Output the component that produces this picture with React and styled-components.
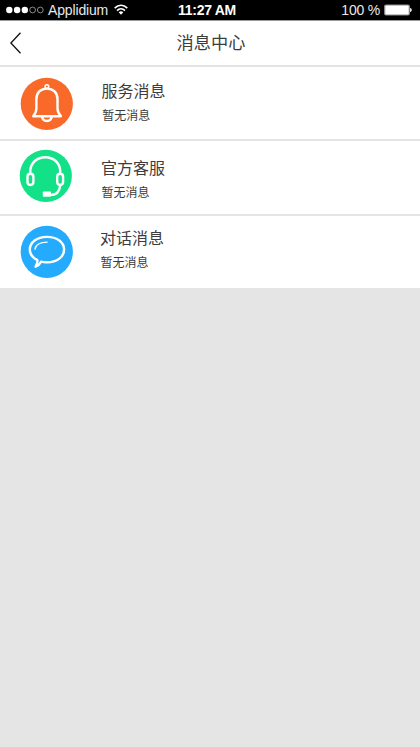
import React from 'react';
import styled, { createGlobalStyle } from 'styled-components';


const messages = [
  { id: 'service', title: '服务消息', text: '暂无消息', color: '#f8692a', height: 72, top: 11, left: 21, textTop: 11, gap: 28.5, indent: 0.7 },
  { id: 'support', title: '官方客服', text: '暂无消息', color: '#12e188', height: 73, top: 9, left: 20, textTop: 14, gap: 29, indent: 0.5 },
  { id: 'chat', title: '对话消息', text: '暂无消息', color: '#24abfd', height: 72, top: 10, left: 21, textTop: 9, gap: 27, indent: 0.6 },
];

const BellIcon = () => (
  <>
    <path d="M12.6 38.5 C14.4 36.4 15.8 34 15.8 30.6 V21.5 C15.8 15 20 10.9 26.3 10.9 S36.9 15 36.9 21.5 V30.6 C36.9 34 38.3 36.4 40.3 38.5 Z" />
    <path d="M21.5 39 C21.9 42.2 23.9 43.3 26.3 43.3 S30.7 42.2 31.1 39" />
    <circle cx="26.3" cy="8.8" r="1.8" strokeWidth="1.6" />
  </>
);

const HeadsetIcon = () => (
  <>
    <path d="M10.7 24 V21.5 C10.9 13 17.6 7.5 25.7 7.5 S40.4 13 40.6 21.5 V24" />
    <rect x="7.9" y="24.1" width="5.9" height="11.2" rx="2.9" />
    <rect x="37.6" y="24.1" width="5.9" height="11.2" rx="2.9" />
    <path d="M40.6 35.6 C40 41.6 36.8 45.2 31 45.2" />
    <rect x="23.2" y="41.8" width="8.2" height="5.2" rx="0.8" fill="#fff" stroke="none" />
  </>
);

const ChatIcon = () => (
  <>
    <path d="M20.4 36 C22.2 36.5 24.3 36.8 26.4 36.7 C36.4 36.4 43.6 31.3 43.5 23.7 C43.4 16 35.8 11.1 26.2 11.2 C16.4 11.3 9.1 16.6 9.2 24.1 C9.3 28.6 12 32 16.8 34.3 C17 36.6 16.2 39 15 41 C18 39.8 19.4 38.2 20.4 36 Z" />
    <path d="M14.4 23.5 C14.8 19.3 19.4 16.4 26.6 16.4" strokeWidth="1.3" />
  </>
);

const icons = { service: BellIcon, support: HeadsetIcon, chat: ChatIcon };

const StatusBar = () => (
  <Status>
    <Carrier>
      <svg width="38" height="8" viewBox="0 0 38 8">
        <circle cx="3.3" cy="4" r="3.2" fill="#fff" />
        <circle cx="11.1" cy="4" r="3.2" fill="#fff" />
        <circle cx="18.8" cy="4" r="3.2" fill="#fff" />
        <circle cx="26.6" cy="4" r="2.9" fill="none" stroke="#a8a8a8" strokeWidth="0.8" />
        <circle cx="34.3" cy="4" r="2.9" fill="none" stroke="#a8a8a8" strokeWidth="0.8" />
      </svg>
      <CarrierName>Applidium</CarrierName>
      <svg width="14" height="11" viewBox="0 0 14 11">
        <g fill="none" stroke="#fff" strokeWidth="1.6">
          <path d="M0.7 4.1 C4.4 0.2 9.6 0.2 13.3 4.1" />
          <path d="M3 6.6 C5.3 4.2 8.7 4.2 11 6.6" />
        </g>
        <path d="M4.7 8.3 Q7 6.4 9.3 8.3 L7 10.7 Z" fill="#fff" />
      </svg>
    </Carrier>
    <Time>11:27 AM</Time>
    <Battery>
      <span>100 %</span>
      <svg width="28" height="12" viewBox="0 0 28 12">
        <rect x="0.7" y="1" width="24.6" height="10" rx="1.2" fill="#fff" stroke="#8c8c8c" strokeWidth="1.2" />
        <path d="M26.1 3.8 Q27.8 4.5 27.8 6 T26.1 8.2 Z" fill="#fff" />
      </svg>
    </Battery>
  </Status>
);

const MessageRow = ({ message }) => {
  const Icon = icons[message.id];

  return (
    <Row $height={message.height} $left={message.left}>
      <Avatar $top={message.top} viewBox="0.4 0.3 52 52">
        <circle cx="26.2" cy="26.1" r="26.1" fill={message.color} />
        <g fill="none" stroke="#fff" strokeWidth="2.4" strokeLinecap="round" strokeLinejoin="round">
          <Icon />
        </g>
      </Avatar>
      <Content $top={message.textTop} $gap={message.gap}>
        <Title>{message.title}</Title>
        <Text $indent={message.indent}>{message.text}</Text>
      </Content>
    </Row>
  );
};

const App = () => {
  return (
    <Page>
      <GlobalStyle />
      <StatusBar />
      <Header>
        <Back aria-label="返回">
          <svg width="12" height="22" viewBox="0 0 12 22">
            <path d="M10.5 0.8 L0.9 11 L10.5 21.2" fill="none" stroke="#111" strokeWidth="1.3" />
          </svg>
        </Back>
        <Heading>消息中心</Heading>
      </Header>
      <List>
        {messages.map((message) => (
          <MessageRow key={message.id} message={message} />
        ))}
      </List>
    </Page>
  );
};

const GlobalStyle = createGlobalStyle`
  * {
    box-sizing: border-box;
  }
  body {
    margin: 0;
    background: #e5e5e5;
  }
`

const Page = styled.div`
  min-height: 747px;
  background: #e5e5e5;
  font-family: "Noto Sans CJK SC", sans-serif;
  color: #3c3c3c;
`

const Status = styled.div`
  display: grid;
  grid-template-columns: 1fr auto 1fr;
  align-items: center;
  height: 21px;
  padding: 0 8px 1px 6px;
  background: #000;
  border-bottom: 1px solid #999;
  color: #fff;
  font-family: "Liberation Sans", Arial, sans-serif;
  font-size: 14px;
  line-height: 18px;
`

const Carrier = styled.div`
  display: flex;
  align-items: center;
`

const CarrierName = styled.span`
  margin: 0 6px 0 4px;
  color: #e8e8e8;
  letter-spacing: -0.15px;
`

const Time = styled.div`
  padding-right: 4px;
  font-weight: bold;
  letter-spacing: -0.3px;
`

const Battery = styled.div`
  display: flex;
  justify-content: flex-end;
  align-items: center;
  gap: 4px;
  color: #e8e8e8;
  letter-spacing: -0.2px;
`

const Header = styled.header`
  display: grid;
  grid-template-columns: 60px 1fr 58px;
  align-items: center;
  height: 46px;
  background: #fff;
  border-bottom: 2px solid #e3e3e3;
`

const Back = styled.button`
  display: flex;
  padding: 0 0 0 10px;
  border: none;
  background: none;
`

const Heading = styled.h1`
  margin: 0;
  padding-bottom: 2px;
  font-size: 17.2px;
  font-weight: 400;
  line-height: 24px;
  text-align: center;
`

const List = styled.div`
  display: flex;
  flex-direction: column;
  gap: 2px;
`

const Row = styled.div`
  display: flex;
  align-items: flex-start;
  height: ${(props) => props.$height}px;
  padding-left: ${(props) => props.$left}px;
  background: #fff;
`

const Avatar = styled.svg`
  flex: none;
  width: 52px;
  height: 52px;
  margin-top: ${(props) => props.$top}px;
  overflow: visible;
`

const Content = styled.div`
  padding-top: ${(props) => props.$top}px;
  padding-left: ${(props) => props.$gap}px;
`

const Title = styled.div`
  font-size: 16px;
  line-height: 24px;
`

const Text = styled.div`
  margin-top: 4px;
  padding-left: ${(props) => props.$indent}px;
  font-size: 12px;
  line-height: 18px;
`

export default App;
